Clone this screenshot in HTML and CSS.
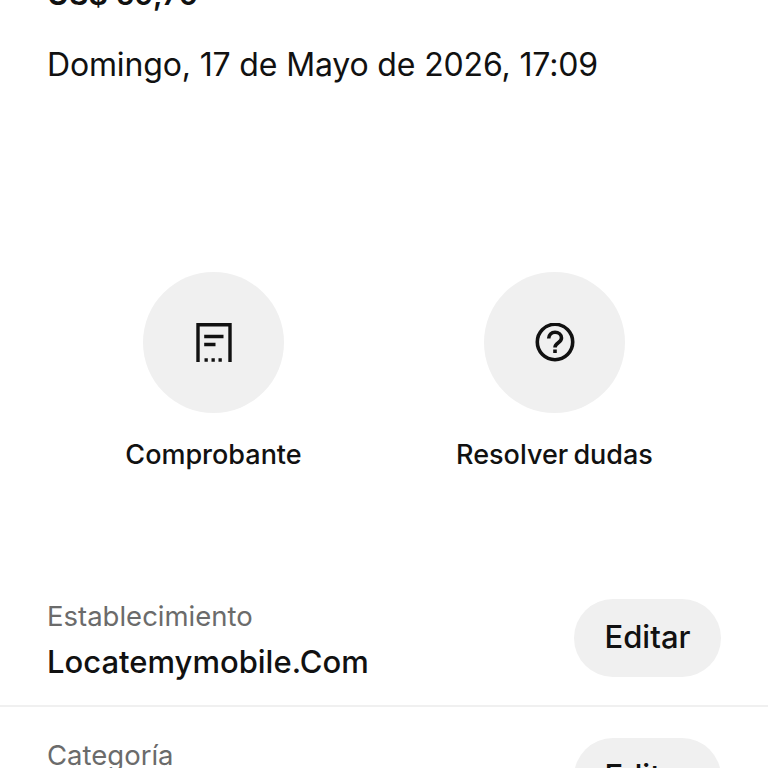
FILE: index.html
```html
<!DOCTYPE html>
<html lang="es">
<head>
<meta charset="utf-8">
<title>Detalle</title>
<link rel="stylesheet" href="styles.css">
</head>
<body>
<main class="page">
  <section class="summary">
    <p class="amount">US$ 59,70</p>
    <p class="date">Domingo, 17 de Mayo de 2026, 17:09</p>
  </section>
  <section class="actions">
    <div class="action">
      <div class="action-circle">
        <svg class="icon" width="38" height="40" viewBox="0 0 38 40" fill="none" stroke="#111" stroke-width="3.400">
          <path d="M3 39V1.700h32V39"/>
          <path d="M9.200 13.500h19.300M9.200 21.500h11.300"/>
          <path d="M9.500 37h3.300M16.500 37h3.300M23.500 37h3.300"/>
        </svg>
      </div>
      <span class="action-label">Comprobante</span>
    </div>
    <div class="action">
      <div class="action-circle">
        <svg class="icon" width="40" height="40" viewBox="0 0 40 40" fill="none" stroke="#111" stroke-width="3.600">
          <circle cx="20" cy="19" r="17.700"/>
          <path d="M13.700 15.500c0-3.800 2.800-6.200 6.300-6.200s6.500 2.300 6.500 5.700c0 4.700-6.500 4.800-6.500 9.500"/>
          <path d="M20 26.500v3.500"/>
        </svg>
      </div>
      <span class="action-label">Resolver dudas</span>
    </div>
  </section>
  <section class="rows">
    <div class="row">
      <div class="row-text">
        <span class="row-label">Establecimiento</span>
        <span class="row-value">Locatemymobile.Com</span>
      </div>
      <button class="edit">Editar</button>
    </div>
    <div class="row">
      <div class="row-text">
        <span class="row-label">Categoría</span>
        <span class="row-value">Servicios</span>
      </div>
      <button class="edit">Editar</button>
    </div>
  </section>
</main>
</body>
</html>
```
FILE: styles.css
```css
html, body {
  margin: 0;
  padding: 0;
  height: 768px;
  overflow: hidden;
  background: #fff;
}
.page {
  height: 768px;
  overflow: hidden;
  font-family: Inter, "Liberation Sans", sans-serif;
  color: #111;
}
.summary {
  margin-top: -19px;
  padding: 0 47px;
}
.amount {
  margin: 0;
  font-size: 30px;
  line-height: 26px;
  font-weight: 600;
}
.date {
  margin: 40px 0 0;
  font-size: 32px;
  line-height: 36px;
  font-weight: 400;
  letter-spacing: -0.15px;
}
.actions {
  display: flex;
  justify-content: center;
  gap: 200px;
  margin-top: 189px;
}
.action {
  width: 141px;
  display: flex;
  flex-direction: column;
  align-items: center;
  gap: 26px;
}
.action-circle {
  width: 141px;
  height: 141px;
  border-radius: 50%;
  background: #f0f0f0;
  display: flex;
  align-items: center;
  justify-content: center;
}
.action-label {
  font-size: 27px;
  line-height: 32px;
  font-weight: 500;
  word-spacing: -2px;
  white-space: nowrap;
}
.rows {
  margin-top: 128px;
}
.row {
  display: flex;
  justify-content: space-between;
  align-items: flex-start;
  padding: 0 47px 24px 47px;
  border-bottom: 2px solid #f0f0f0;
  margin-bottom: 31px;
}
.row-text {
  display: flex;
  flex-direction: column;
  gap: 10px;
}
.row-label {
  font-size: 27.500px;
  line-height: 34px;
  color: #6b6b6b;
}
.row-value {
  font-size: 31px;
  line-height: 38px;
  font-weight: 500;
}
.edit {
  width: 147px;
  height: 78px;
  border: 0;
  padding: 0 0 3px;
  border-radius: 39px;
  background: #f0f0f0;
  font: 500 31px Inter, "Liberation Sans", sans-serif;
  color: #111;
}
```
